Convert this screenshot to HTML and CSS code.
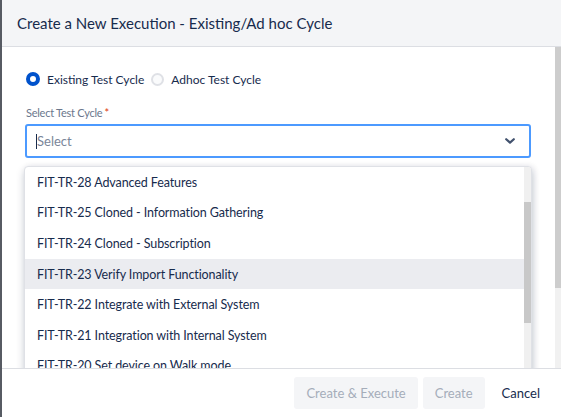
FILE: index.html
```html
<!DOCTYPE html>
<html>
<head>
<meta charset="utf-8">
<link rel="stylesheet" href="styles.css">
</head>
<body>
<div class="modal">
  <div class="header">
    <h1 class="title">Create a New Execution - Existing/Ad hoc Cycle</h1>
  </div>
  <div class="body">
    <div class="content">
      <div class="radios">
        <label class="radio"><span class="dot checked"></span><span class="rlabel">Existing Test Cycle</span></label>
        <label class="radio"><span class="dot"></span><span class="rlabel">Adhoc Test Cycle</span></label>
      </div>
      <div class="field">
        <div class="flabel">Select Test Cycle<span class="req">*</span></div>
        <div class="select">
          <span class="caret"></span><span class="placeholder">Select</span>
          <svg class="chev" width="10" height="6" viewBox="0 0 10 6"><path d="M1.2 1.2 L5 4.6 L8.8 1.2" fill="none" stroke="#42526e" stroke-width="2.2" stroke-linecap="round" stroke-linejoin="round"/></svg>
        </div>
        <div class="menu">
          <div class="list">
            <div class="item">FIT-TR-28 Advanced Features</div>
            <div class="item">FIT-TR-25 Cloned - Information Gathering</div>
            <div class="item">FIT-TR-24 Cloned - Subscription</div>
            <div class="item active">FIT-TR-23 Verify Import Functionality</div>
            <div class="item">FIT-TR-22 Integrate with External System</div>
            <div class="item">FIT-TR-21 Integration with Internal System</div>
            <div class="item">FIT-TR-20 Set device on Walk mode</div>
            <div class="item">FIT-TR-19 Set device on Run mode</div>
          </div>
          <div class="mscroll"><div class="mthumb"></div></div>
        </div>
      </div>
    </div>
    <div class="scroll"><div class="thumb"></div></div>
  </div>
  <div class="footer">
    <button class="btn disabled">Create &amp; Execute</button>
    <button class="btn disabled">Create</button>
    <button class="btn link">Cancel</button>
  </div>
</div>
</body>
</html>
```

FILE: styles.css
```css
* { box-sizing: border-box; }
html, body { margin: 0; height: 100%; }
body {
  background: #575b63;
  font-family: Lato, "Noto Sans", sans-serif;
  color: #172b4d;
  overflow: hidden;
}
.modal {
  margin-left: 2px;
  height: 417px;
  background: #fff;
  display: flex;
  flex-direction: column;
}
.header {
  height: 47px;
  background: #f4f5f7;
  border-bottom: 1px solid #dcdee3;
  display: flex;
  align-items: center;
  padding-left: 15px;
  flex: none;
}
.title {
  margin: 0;
  font-size: 15px;
  font-weight: 400;
  color: #172b4d;
  padding-bottom: 1px;
}
.body {
  flex: 1;
  display: flex;
  overflow: hidden;
  min-height: 0;
}
.content {
  flex: 1;
  padding: 22px 23px 0 23px;
}
.radios {
  display: flex;
  align-items: center;
  height: 20px;
  gap: 6px;
}
.radio {
  display: flex;
  align-items: center;
  font-size: 12px;
}
.dot {
  width: 14px;
  height: 14px;
  border-radius: 50%;
  background: #fafbfc;
  border: 2px solid #dfe1e6;
  margin: 0 7px 0 1px;
  flex: none;
}
.dot.checked {
  background: #fff;
  border: 4px solid #0052cc;
  margin-left: 1px;
}
.dot:not(.checked) { width: 13px; height: 13px; }
.field {
  position: relative;
  margin-top: 16px;
}
.flabel {
  font-size: 11px;
  letter-spacing: -0.25px;
  color: #6b778c;
  height: 16px;
  line-height: 16px;
  padding-left: 1px;
}
.req { color: #de350b; margin-left: 2px; }
.select {
  margin-top: 3px;
  height: 34px;
  border: 2px solid #4c9aff;
  border-radius: 3px;
  display: flex;
  align-items: center;
  padding-left: 9px;
  padding-right: 14px;
  margin-right: 1px;
}
.caret {
  width: 1px;
  height: 15px;
  background: #172b4d;
}
.placeholder {
  color: #7a869a;
  font-size: 13px;
  flex: 1;
}
.chev { flex: none; }
.menu {
  position: absolute;
  top: 61px;
  left: -1px;
  width: 508px;
  height: 240px;
  background: #fff;
  border: 1px solid #dfe1e6;
  border-radius: 4px;
  box-shadow: 0 4px 8px rgba(9, 30, 66, 0.2), 2px 0 6px rgba(9, 30, 66, 0.08);
  overflow: hidden;
  display: flex;
}
.list { flex: 1; }
.item {
  height: 30.6px;
  display: flex;
  align-items: center;
  padding-left: 12px;
  font-size: 12.5px;
  letter-spacing: -0.1px;
  color: #172b4d;
  white-space: nowrap;
}
.item.active { background: #ebecf0; }
.mscroll {
  width: 7px;
  background: #f0f0f0;
  flex: none;
  padding-top: 35px;
}
.mthumb {
  height: 121px;
  background: #c8c8c8;
}
.scroll {
  width: 6px;
  background: #f1f1f1;
  flex: none;
}
.thumb {
  height: 241px;
  background: #cdcdcd;
}
.footer {
  height: 49px;
  flex: none;
  border-top: 1px solid #dcdee3;
  display: flex;
  align-items: center;
  justify-content: flex-end;
  padding-right: 9px;
  gap: 5px;
  background: #fff;
}
.btn {
  height: 32px;
  border: none;
  border-radius: 3px;
  font-family: inherit;
  font-size: 13px;
  padding: 0 12px;
  background: none;
  color: #172b4d;
}
.btn.disabled {
  background: #f4f5f7;
  color: #a5adba;
}
.btn.link { color: #172b4d; }
```
